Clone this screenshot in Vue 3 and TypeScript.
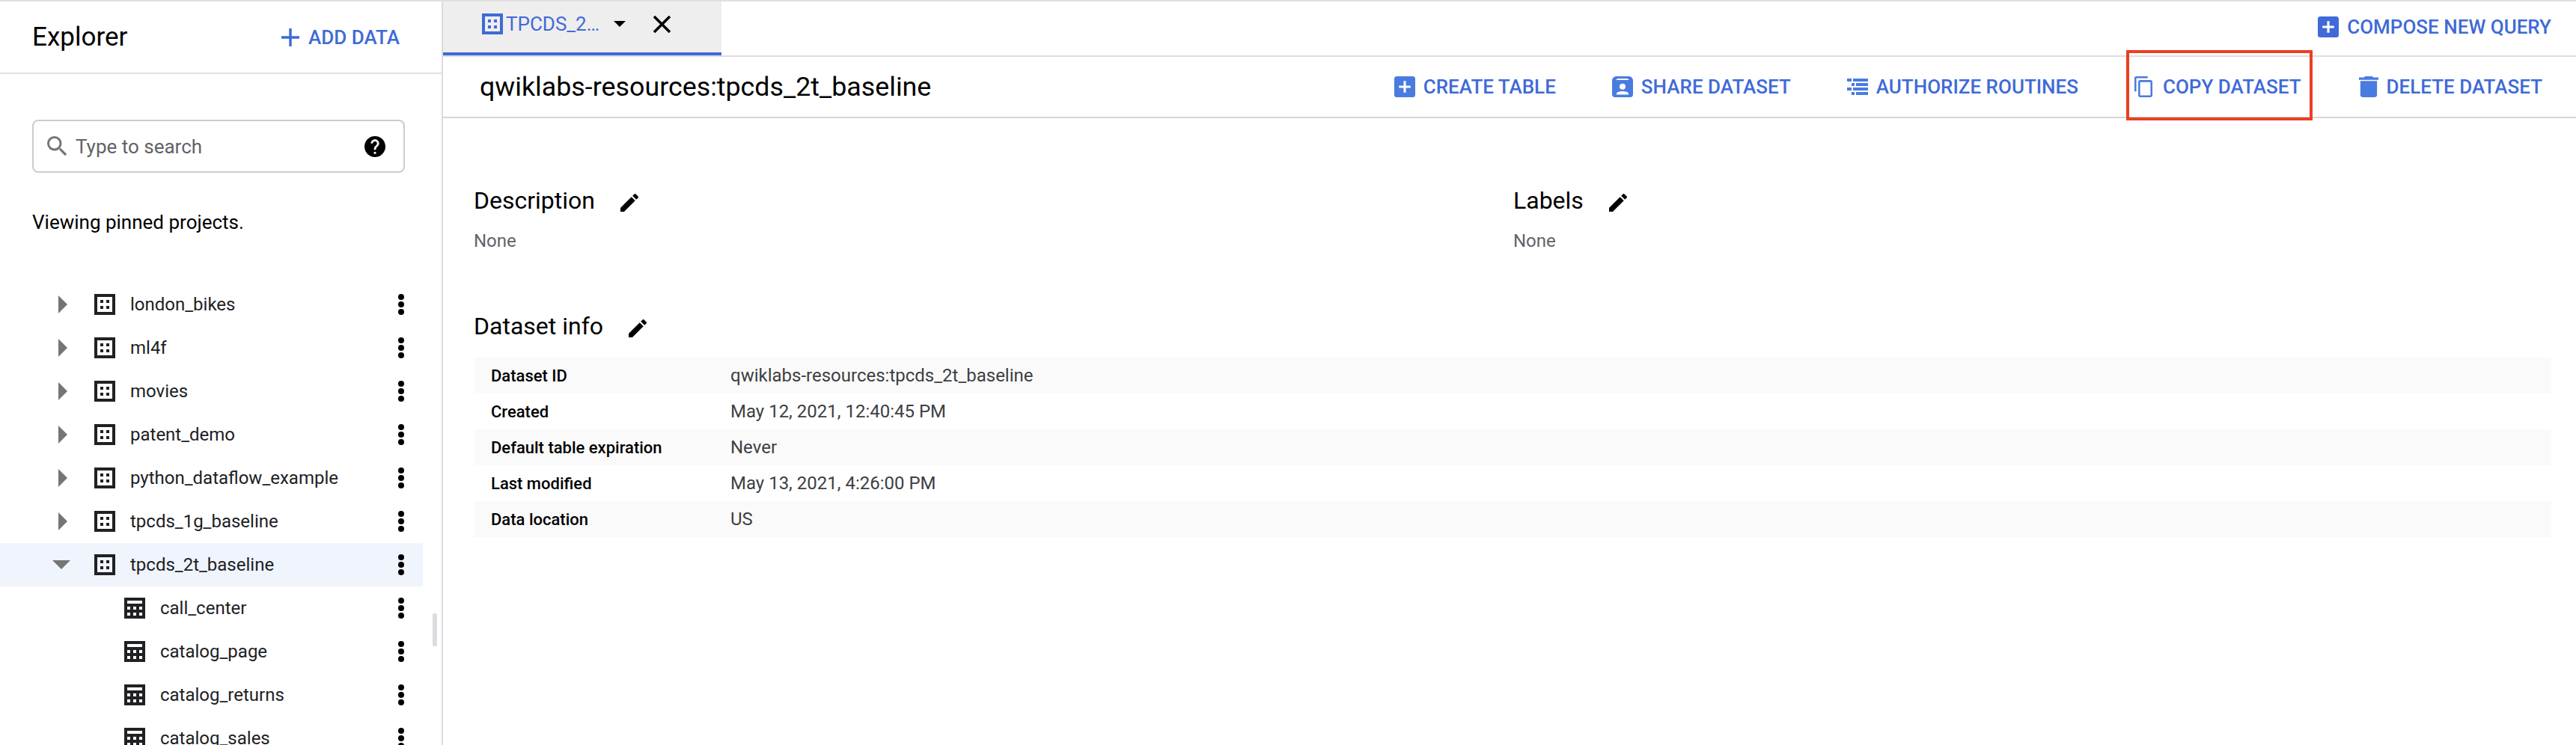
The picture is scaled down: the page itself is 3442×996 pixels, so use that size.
<template>
  <div class="page">
    <aside class="side">
      <div class="side-head">
        <span class="side-title">Explorer</span>
        <span class="add-data">
          <svg class="add-icon" viewBox="5 5 14 14"><path d="M19 13h-6v6h-2v-6H5v-2h6V5h2v6h6v2z" /></svg>
          ADD DATA
        </span>
      </div>
      <div class="search">
        <svg class="search-icon" viewBox="3 3 18 18"><path :d="icons.search" /></svg>
        <span class="search-text">Type to search</span>
        <svg class="help-icon" viewBox="2 2 20 20"><path :d="icons.help" /></svg>
      </div>
      <p class="viewing">Viewing pinned projects.</p>
      <div class="tree-wrap">
        <ul class="tree">
          <li v-for="row in rows" :key="row.name" class="row" :class="{ selected: row.open, child: row.table }">
            <template v-if="!row.table">
              <svg v-if="row.open" class="caret-down" viewBox="0 0 24 12"><path d="M0 0h24L12 12z" /></svg>
              <svg v-else class="caret" viewBox="0 0 12 24"><path d="M0 0l12 12L0 24z" /></svg>
            </template>
            <svg v-if="row.table" class="node-icon" viewBox="0 0 28 28">
              <path fill-rule="evenodd" d="M0 0h28v28H0zM4 4v4h20V4zM4 12v4h4v-4zm8 0v4h4v-4zm8 0v4h4v-4zM4 20v4h4v-4zm8 0v4h4v-4zm8 0v4h4v-4z" />
            </svg>
            <svg v-else class="node-icon" viewBox="0 0 28 28">
              <path fill-rule="evenodd" d="M0 0h28v28H0zM4 4v20h20V4zM8 8h4v4H8zm8 0h4v4h-4zM8 16h4v4H8zm8 0h4v4h-4z" />
            </svg>
            <span class="row-name">{{ row.name }}</span>
            <span class="dots"><i /><i /><i /></span>
          </li>
        </ul>
        <div class="gutter"><div class="thumb" /></div>
      </div>
    </aside>

    <main class="main">
      <div class="tabs">
        <div class="tab">
          <svg class="tab-icon" viewBox="0 0 28 28">
            <path fill-rule="evenodd" d="M0 0h28v28H0zM4 4v20h20V4zM8 8h4v4H8zm8 0h4v4h-4zM8 16h4v4H8zm8 0h4v4h-4z" />
          </svg>
          <span class="tab-name">TPCDS_2…</span>
          <svg class="tab-caret" viewBox="0 0 16 8"><path d="M0 0h16L8 8z" /></svg>
          <svg class="tab-close" viewBox="0 0 25 25"><path d="M2 2l21 21M23 2L2 23" /></svg>
        </div>
        <span class="compose">
          <svg class="btn-icon" viewBox="3 3 18 18"><path :d="icons.addBox" /></svg>
          COMPOSE NEW QUERY
        </span>
      </div>

      <div class="toolbar">
        <h1 class="title">qwiklabs-resources:tpcds_2t_baseline</h1>
        <div class="actions">
          <span v-for="a in actions" :key="a.label" class="action" :class="a.cls">
            <svg class="btn-icon" :viewBox="a.box" preserveAspectRatio="none"><path fill-rule="evenodd" :d="a.d" /></svg>
            {{ a.label }}
          </span>
        </div>
        <div class="callout" />
      </div>

      <div class="content">
        <div class="two-col">
          <section>
            <h2 class="sec-title">Description <svg class="edit" viewBox="3 3 18 18"><path :d="icons.edit" /></svg></h2>
            <p class="none">None</p>
          </section>
          <section>
            <h2 class="sec-title">Labels <svg class="edit" viewBox="3 3 18 18"><path :d="icons.edit" /></svg></h2>
            <p class="none">None</p>
          </section>
        </div>
        <h2 class="sec-title info-title">Dataset info <svg class="edit" viewBox="3 3 18 18"><path :d="icons.edit" /></svg></h2>
        <div class="info">
          <div v-for="item in info" :key="item[0]" class="info-row">
            <span class="info-key">{{ item[0] }}</span>
            <span class="info-val">{{ item[1] }}</span>
          </div>
        </div>
      </div>
    </main>
  </div>
</template>

<script setup lang="ts">
interface TreeRow {
  name: string
  open?: boolean
  table?: boolean
}

const icons = {
  search: 'M15.5 14h-.79l-.28-.27A6.471 6.471 0 0 0 16 9.5 6.5 6.5 0 1 0 9.5 16c1.61 0 3.09-.59 4.23-1.57l.27.28v.79l5 4.99L20.49 19l-4.99-5zm-6 0C7.01 14 5 11.99 5 9.5S7.01 5 9.5 5 14 7.01 14 9.5 11.99 14 9.5 14z',
  help: 'M12 2C6.48 2 2 6.48 2 12s4.48 10 10 10 10-4.48 10-10S17.52 2 12 2zm1 17h-2v-2h2v2zm2.07-7.75l-.9.92C13.45 12.9 13 13.5 13 15h-2v-.5c0-1.1.45-2.1 1.17-2.83l1.24-1.26c.37-.36.59-.86.59-1.41 0-1.1-.9-2-2-2s-2 .9-2 2H8c0-2.21 1.79-4 4-4s4 1.79 4 4c0 .88-.36 1.68-.93 2.25z',
  addBox: 'M19 3H5c-1.1 0-2 .9-2 2v14c0 1.1.9 2 2 2h14c1.1 0 2-.9 2-2V5c0-1.1-.9-2-2-2zm-2 10h-4v4h-2v-4H7v-2h4V7h2v4h4v2z',
  edit: 'M3 17.25V21h3.75L17.81 9.94l-3.75-3.75L3 17.25zM20.71 7.04c.39-.39.39-1.02 0-1.41l-2.34-2.34c-.39-.39-1.02-.39-1.41 0l-1.83 1.83 3.75 3.75 1.83-1.83z',
}

const rows: TreeRow[] = [
  { name: 'london_bikes' },
  { name: 'ml4f' },
  { name: 'movies' },
  { name: 'patent_demo' },
  { name: 'python_dataflow_example' },
  { name: 'tpcds_1g_baseline' },
  { name: 'tpcds_2t_baseline', open: true },
  { name: 'call_center', table: true },
  { name: 'catalog_page', table: true },
  { name: 'catalog_returns', table: true },
  { name: 'catalog_sales', table: true },
]

const actions = [
  { label: 'CREATE TABLE', box: '3 3 18 18', cls: '', d: icons.addBox },
  {
    label: 'SHARE DATASET',
    box: '0 0 28 28',
    cls: '',
    d: 'M6 0h16c3.5 0 6 2.5 6 6v18a4 4 0 0 1-4 4H4a4 4 0 0 1-4-4V6c0-3.500 2.500-6 6-6zM8 3c-1.500 0-2 1-2.500 2h17C22 4 21.500 3 20 3zM14 9.700a4 4 0 1 0 0 8 4 4 0 0 0 0-8zM6 24.500h16V23c0-2-5-3-8-3s-8 1-8 3z',
  },
  {
    label: 'AUTHORIZE ROUTINES',
    box: '0 -3 28 28',
    cls: '',
    d: 'M0 0h6v4H0zM8 0h20v4H8zM6 6h4v4H6zM12 6h16v4H12zM0 12h6v4H0zM8 12h20v4H8zM6 18h4v4H6zM12 18h16v4H12z',
  },
  {
    label: 'COPY DATASET',
    box: '2 1 19 22',
    cls: 'copy',
    d: 'M16 1H4c-1.100 0-2 .9-2 2v14h2V3h12V1zm3 4H8c-1.100 0-2 .9-2 2v14c0 1.100.9 2 2 2h11c1.100 0 2-.9 2-2V7c0-1.100-.9-2-2-2zm0 16H8V7h11v14z',
  },
  {
    label: 'DELETE DATASET',
    box: '5 3 14 18',
    cls: 'trash',
    d: 'M6 19c0 1.100.9 2 2 2h8c1.100 0 2-.9 2-2V7H6v12zM19 4h-3.500l-1-1h-5l-1 1H5v2h14V4z',
  },
]

const info = [
  ['Dataset ID', 'qwiklabs-resources:tpcds_2t_baseline'],
  ['Created', 'May 12, 2021, 12:40:45 PM'],
  ['Default table expiration', 'Never'],
  ['Last modified', 'May 13, 2021, 4:26:00 PM'],
  ['Data location', 'US'],
]
</script>

<style>
html, body { margin: 0; background: #fff; }
</style>

<style scoped>
.page {
  display: flex;
  height: 996px;
  overflow: hidden;
  box-sizing: border-box;
  border-top: 2px solid #e0e0e0;
  font-family: Roboto, "Liberation Sans", sans-serif;
  color: #000;
}

.side {
  width: 592px;
  flex: none;
  box-sizing: border-box;
  border-right: 2px solid #dadce0;
  display: flex;
  flex-direction: column;
}
.side-head {
  height: 97px;
  flex: none;
  box-sizing: border-box;
  border-bottom: 2px solid #e0e0e0;
  display: flex;
  align-items: center;
  justify-content: space-between;
  padding: 0 56px 0 43px;
}
.side-title { font-size: 35px; }
.add-data {
  display: flex;
  align-items: center;
  gap: 12px;
  font-size: 26px;
  font-weight: 500;
  color: #3f6ad8;
}
.add-icon { width: 24px; height: 24px; fill: #3f6ad8; }

.search {
  margin: 61px 0 0 43px;
  width: 498px;
  height: 71px;
  box-sizing: border-box;
  border: 2px solid #ccc;
  border-radius: 8px;
  display: flex;
  align-items: center;
  padding: 0 24px 0 18px;
}
.search-icon { width: 27px; height: 27px; fill: #757575; }
.search-text { flex: 1; margin-left: 11px; font-size: 26px; color: #5f6368; }
.help-icon { width: 28px; height: 28px; fill: #000; }

.viewing { margin: 50px 0 0 43px; font-size: 26px; line-height: 32px; }

.tree-wrap { flex: 1; min-height: 0; margin-top: 65px; display: flex; overflow: hidden; }
.tree { list-style: none; margin: 0; padding: 0; width: 565px; flex: none; }
.row {
  height: 58px;
  display: flex;
  align-items: center;
  position: relative;
  padding-left: 126px;
  color: #202124;
}
.row.child { padding-left: 166px; }
.row.selected { background: #f0f4fc; }
.caret { position: absolute; left: 78px; width: 12px; height: 24px; fill: #757575; }
.caret-down { position: absolute; left: 70px; width: 24px; height: 12px; fill: #757575; }
.node-icon { width: 28px; height: 28px; flex: none; fill: #202124; }
.row-name { margin-left: 20px; font-size: 24px; }
.dots {
  position: absolute;
  left: 532px;
  display: flex;
  flex-direction: column;
  gap: 2px;
}
.dots i { display: block; width: 8px; height: 8px; border-radius: 50%; background: #000; }
.gutter { flex: 1; padding: 0 6px 0 13px; }
.thumb { margin-top: 442px; width: 6px; height: 44px; border-radius: 2px; background: #dadce0; }

.main { flex: 1; min-width: 0; display: flex; flex-direction: column; }
.tabs {
  height: 74px;
  flex: none;
  box-sizing: border-box;
  border-bottom: 2px solid #dedede;
  display: flex;
  justify-content: space-between;
  padding-right: 33px;
}
.tab {
  width: 372px;
  height: 72px;
  box-sizing: border-box;
  background: #eee;
  border-bottom: 4px solid #3f6ad8;
  display: flex;
  align-items: center;
  padding: 0 0 8px 52px;
}
.tab-icon { width: 28px; height: 28px; fill: #3f6ad8; flex: none; }
.tab-name { margin-left: 4px; width: 131px; font-size: 26px; color: #3f6ad8; white-space: nowrap; }
.tab-caret { margin-left: 13px; width: 16px; height: 8px; fill: #000; }
.tab-close { margin-left: 36px; width: 25px; height: 25px; stroke: #000; stroke-width: 3.5; fill: none; }
.compose, .action {
  display: flex;
  align-items: center;
  gap: 11px;
  font-size: 26px;
  font-weight: 500;
  color: #3f6ad8;
  white-space: nowrap;
}
.compose { padding-bottom: 4px; }
.btn-icon { width: 28px; height: 28px; flex: none; fill: #4a7be0; }
.action.copy .btn-icon { width: 24px; margin-right: 3px; }
.action.trash { margin-left: 2px; }
.action.trash .btn-icon { width: 26px; }
.compose .btn-icon { fill: #3f6ad8; }

.toolbar {
  height: 82px;
  flex: none;
  box-sizing: border-box;
  border-bottom: 2px solid #d6d6d6;
  display: flex;
  align-items: center;
  justify-content: space-between;
  padding: 0 45px 0 49px;
  position: relative;
}
.title { margin: 0; font-size: 35.8px; font-weight: 400; }
.actions { display: flex; gap: 75px; }
.callout {
  position: absolute;
  left: 2249px;
  top: -9px;
  width: 249px;
  height: 94px;
  box-sizing: border-box;
  border: 4px solid #ea3f23;
}

.content { padding: 0 33px 0 41px; }
.two-col { display: grid; grid-template-columns: 1389px 1fr; padding-top: 90px; }
.sec-title {
  margin: 0;
  font-size: 32px;
  font-weight: 400;
  line-height: 40px;
  display: flex;
  align-items: center;
  gap: 34px;
}
.edit { width: 24px; height: 24px; fill: #000; margin-top: 6px; }
.none { margin: 20px 0 0; font-size: 24px; line-height: 28px; color: #5f6368; }
.info-title { margin-top: 80px; }
.info { margin-top: 22px; }
.info-row {
  height: 48px;
  display: flex;
  align-items: center;
  padding-left: 23px;
  font-size: 24px;
}
.info-row:nth-child(odd) { background: #fafafa; }
.info-key { width: 320px; font-size: 22px; font-weight: 500; }
.info-val { color: #3c4043; }
</style>
